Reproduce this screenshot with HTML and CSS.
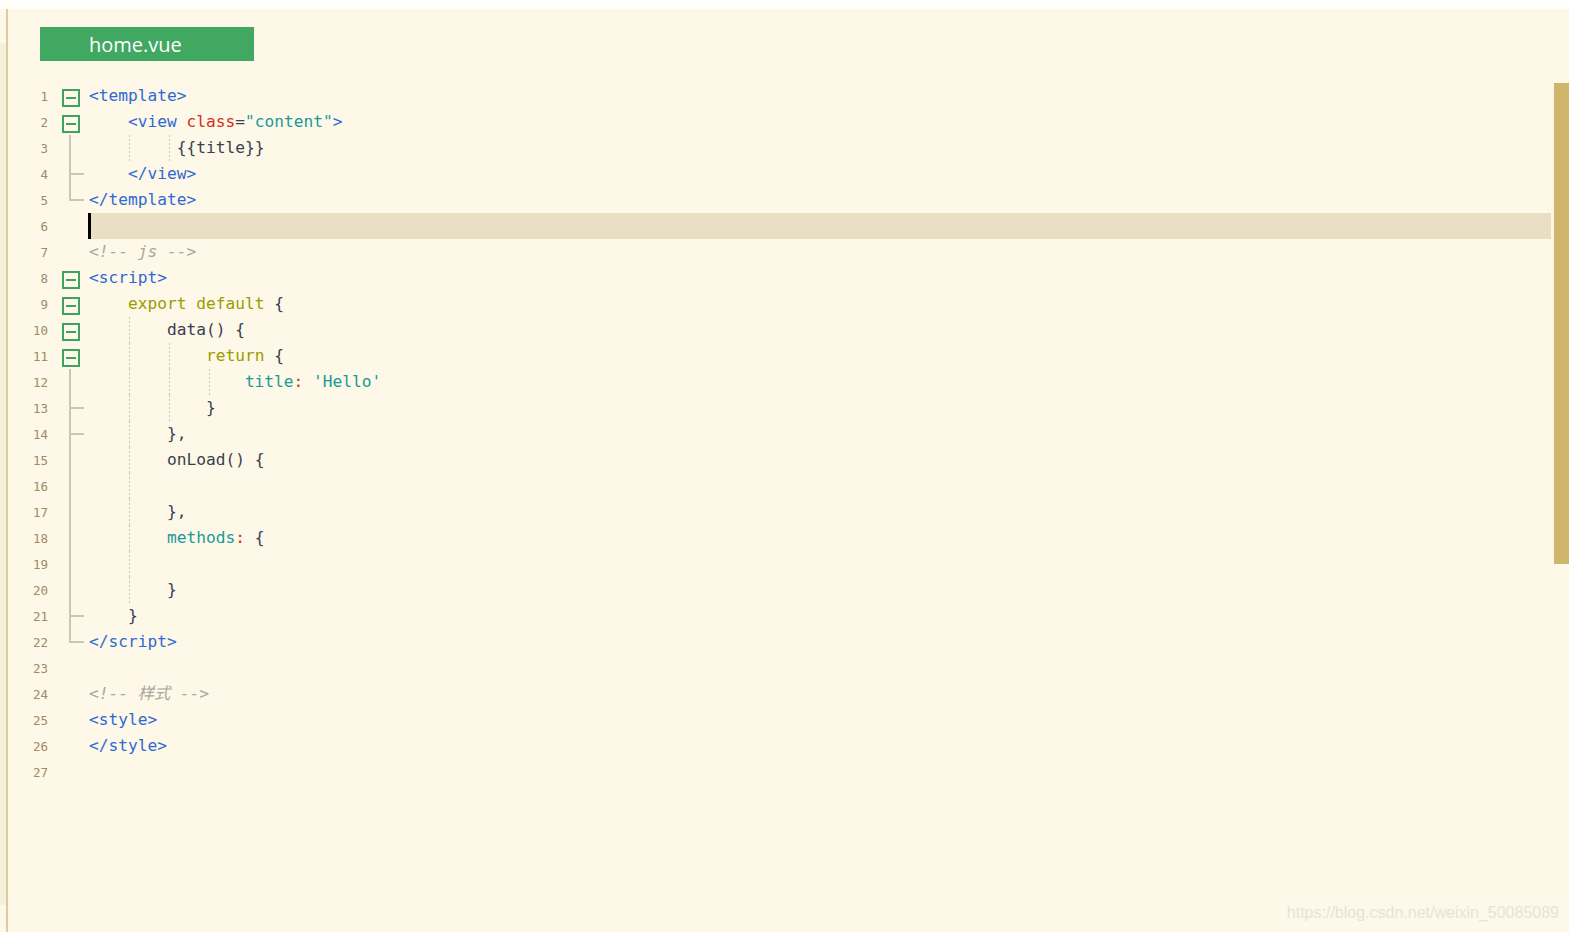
FILE: index.html
```html
<!DOCTYPE html>
<html lang="zh">
<head>
<meta charset="utf-8">
<title>home.vue</title>
<link rel="stylesheet" href="styles.css">
</head>
<body>
<div class="topstrip"></div>
<div class="editor">
  <div class="side">
    <div class="side-top"></div>
    <div class="side-mid"></div>
    <div class="side-bot"></div>
  </div>
  <div class="sideline"></div>
  <div class="main">
    <div class="tabbar"><div class="tab">home.vue</div></div>
    <div class="body">
      <div class="lines">
        <div class="line"><span class="num">1</span><span class="gut"><svg width="41" height="26"><rect class="fb" x="15" y="7" width="16" height="16"/><line class="fm" x1="18" y1="15" x2="28" y2="15"/></svg></span><span class="code"><span class="tg">&lt;template&gt;</span></span></div>
        <div class="line"><span class="num">2</span><span class="gut"><svg width="41" height="26"><rect class="fb" x="15" y="7" width="16" height="16"/><line class="fm" x1="18" y1="15" x2="28" y2="15"/></svg></span><span class="code"><span class="ws"></span><span class="tg">&lt;view </span><span class="at">class</span><span class="tx">=</span><span class="st">"content"</span><span class="tg">&gt;</span></span></div>
        <div class="line"><span class="num">3</span><span class="gut"><svg width="41" height="26"><line class="fl" x1="22" y1="0" x2="22" y2="26"/></svg></span><span class="code"><span class="ws"></span><span class="ws g1"></span><span class="ws1 g2"></span><span class="tx">{{title}}</span></span></div>
        <div class="line"><span class="num">4</span><span class="gut"><svg width="41" height="26"><line class="fl" x1="22" y1="0" x2="22" y2="26"/><line class="fl" x1="23" y1="13" x2="36" y2="13"/></svg></span><span class="code"><span class="ws"></span><span class="tg">&lt;/view&gt;</span></span></div>
        <div class="line"><span class="num">5</span><span class="gut"><svg width="41" height="26"><line class="fl" x1="22" y1="0" x2="22" y2="14"/><line class="fl" x1="21" y1="13" x2="36" y2="13"/></svg></span><span class="code"><span class="tg">&lt;/template&gt;</span></span></div>
        <div class="line"><span class="num">6</span><span class="gut"></span><span class="code cur"><span class="caret"></span></span></div>
        <div class="line"><span class="num">7</span><span class="gut"></span><span class="code"><span class="cm">&lt;!-- js --&gt;</span></span></div>
        <div class="line"><span class="num">8</span><span class="gut"><svg width="41" height="26"><rect class="fb" x="15" y="7" width="16" height="16"/><line class="fm" x1="18" y1="15" x2="28" y2="15"/></svg></span><span class="code"><span class="tg">&lt;script&gt;</span></span></div>
        <div class="line"><span class="num">9</span><span class="gut"><svg width="41" height="26"><rect class="fb" x="15" y="7" width="16" height="16"/><line class="fm" x1="18" y1="15" x2="28" y2="15"/></svg></span><span class="code"><span class="ws"></span><span class="kw">export default</span><span class="tx"> {</span></span></div>
        <div class="line"><span class="num">10</span><span class="gut"><svg width="41" height="26"><rect class="fb" x="15" y="7" width="16" height="16"/><line class="fm" x1="18" y1="15" x2="28" y2="15"/></svg></span><span class="code"><span class="ws"></span><span class="ws g1"></span><span class="tx">data() {</span></span></div>
        <div class="line"><span class="num">11</span><span class="gut"><svg width="41" height="26"><rect class="fb" x="15" y="7" width="16" height="16"/><line class="fm" x1="18" y1="15" x2="28" y2="15"/></svg></span><span class="code"><span class="ws"></span><span class="ws g1"></span><span class="ws g2"></span><span class="kw">return</span><span class="tx"> {</span></span></div>
        <div class="line"><span class="num">12</span><span class="gut"><svg width="41" height="26"><line class="fl" x1="22" y1="0" x2="22" y2="26"/></svg></span><span class="code"><span class="ws"></span><span class="ws g1"></span><span class="ws g2"></span><span class="ws g3"></span><span class="st">title</span><span class="at">:</span><span class="st"> 'Hello'</span></span></div>
        <div class="line"><span class="num">13</span><span class="gut"><svg width="41" height="26"><line class="fl" x1="22" y1="0" x2="22" y2="26"/><line class="fl" x1="23" y1="13" x2="36" y2="13"/></svg></span><span class="code"><span class="ws"></span><span class="ws g1"></span><span class="ws g2"></span><span class="tx">}</span></span></div>
        <div class="line"><span class="num">14</span><span class="gut"><svg width="41" height="26"><line class="fl" x1="22" y1="0" x2="22" y2="26"/><line class="fl" x1="23" y1="13" x2="36" y2="13"/></svg></span><span class="code"><span class="ws"></span><span class="ws g1"></span><span class="tx">},</span></span></div>
        <div class="line"><span class="num">15</span><span class="gut"><svg width="41" height="26"><line class="fl" x1="22" y1="0" x2="22" y2="26"/></svg></span><span class="code"><span class="ws"></span><span class="ws g1"></span><span class="tx">onLoad() {</span></span></div>
        <div class="line"><span class="num">16</span><span class="gut"><svg width="41" height="26"><line class="fl" x1="22" y1="0" x2="22" y2="26"/></svg></span><span class="code"><span class="ws"></span><span class="ws g1"></span></span></div>
        <div class="line"><span class="num">17</span><span class="gut"><svg width="41" height="26"><line class="fl" x1="22" y1="0" x2="22" y2="26"/></svg></span><span class="code"><span class="ws"></span><span class="ws g1"></span><span class="tx">},</span></span></div>
        <div class="line"><span class="num">18</span><span class="gut"><svg width="41" height="26"><line class="fl" x1="22" y1="0" x2="22" y2="26"/></svg></span><span class="code"><span class="ws"></span><span class="ws g1"></span><span class="st">methods</span><span class="at">:</span><span class="tx"> {</span></span></div>
        <div class="line"><span class="num">19</span><span class="gut"><svg width="41" height="26"><line class="fl" x1="22" y1="0" x2="22" y2="26"/></svg></span><span class="code"><span class="ws"></span><span class="ws g1"></span></span></div>
        <div class="line"><span class="num">20</span><span class="gut"><svg width="41" height="26"><line class="fl" x1="22" y1="0" x2="22" y2="26"/></svg></span><span class="code"><span class="ws"></span><span class="ws g1"></span><span class="tx">}</span></span></div>
        <div class="line"><span class="num">21</span><span class="gut"><svg width="41" height="26"><line class="fl" x1="22" y1="0" x2="22" y2="26"/><line class="fl" x1="23" y1="13" x2="36" y2="13"/></svg></span><span class="code"><span class="ws"></span><span class="tx">}</span></span></div>
        <div class="line"><span class="num">22</span><span class="gut"><svg width="41" height="26"><line class="fl" x1="22" y1="0" x2="22" y2="14"/><line class="fl" x1="21" y1="13" x2="36" y2="13"/></svg></span><span class="code"><span class="tg">&lt;/script&gt;</span></span></div>
        <div class="line"><span class="num">23</span><span class="gut"></span><span class="code"></span></div>
        <div class="line"><span class="num">24</span><span class="gut"></span><span class="code"><span class="cm">&lt;!-- 样式 --&gt;</span></span></div>
        <div class="line"><span class="num">25</span><span class="gut"></span><span class="code"><span class="tg">&lt;style&gt;</span></span></div>
        <div class="line"><span class="num">26</span><span class="gut"></span><span class="code"><span class="tg">&lt;/style&gt;</span></span></div>
        <div class="line"><span class="num">27</span><span class="gut"></span><span class="code"></span></div>
      </div>
      <div class="scroll"><div class="thumb"></div></div>
    </div>
  </div>
</div>
<div class="watermark">https://blog.csdn.net/weixin_50085089</div>
</body>
</html>
```
FILE: styles.css
```css
html, body {
  margin: 0;
  padding: 0;
}
body {
  width: 1569px;
  height: 932px;
  overflow: hidden;
  background: #fdf8e7;
  position: relative;
  display: flex;
  flex-direction: column;
}
.topstrip {
  height: 9px;
  background: #fffefb;
  flex: none;
}
.editor {
  flex: 1;
  display: flex;
  min-height: 0;
}
.side {
  width: 6px;
  display: flex;
  flex-direction: column;
}
.side-top { height: 34px; }
.side-mid { flex: 1; background: #f6efd9; }
.side-bot { height: 27px; }
.sideline {
  width: 2px;
  background: #dccb9d;
}
.main {
  flex: 1;
  display: flex;
  flex-direction: column;
  min-width: 0;
}
.tabbar {
  padding: 18px 0 22px 32px;
}
.tab {
  width: 165px;
  height: 34px;
  padding-left: 49px;
  box-sizing: content-box;
  background: #41a862;
  color: #ffffff;
  font-family: "Open Sans", "Noto Sans", sans-serif;
  font-size: 20px;
  line-height: 36px;
}
.body {
  display: flex;
  flex: 1;
  min-height: 0;
}
.lines {
  flex: 1;
  margin-right: 3px;
  display: flex;
  flex-direction: column;
}
.line {
  display: flex;
  height: 26px;
}
.num {
  width: 40px;
  flex: none;
  text-align: right;
  font-family: "DejaVu Sans Mono", monospace;
  font-size: 12.5px;
  line-height: 26px;
  color: #a08a68;
  padding-top: 1px;
  box-sizing: border-box;
}
.gut {
  width: 41px;
  flex: none;
  height: 26px;
}
.gut svg {
  display: block;
}
.fb {
  fill: none;
  stroke: #3ea35e;
  stroke-width: 2;
}
.fm {
  stroke: #3ea35e;
  stroke-width: 2;
}
.fl {
  stroke: #cbc6b5;
  stroke-width: 2;
}
.code {
  flex: 1;
  display: flex;
  white-space: pre;
  font-family: "DejaVu Sans Mono", "Noto Sans CJK SC", monospace;
  font-size: 16.2px;
  line-height: 26px;
  color: #394050;
}
.code.cur {
  background: #e8dfc4;
}
.caret {
  width: 3px;
  height: 26px;
  margin-left: -1px;
  background: #000000;
}
.ws {
  display: inline-block;
  width: 4ch;
  height: 26px;
  flex: none;
}
.ws1 {
  display: inline-block;
  width: 1ch;
  height: 26px;
  flex: none;
}
.g1, .g2, .g3 {
  background-image: repeating-linear-gradient(to bottom, #c9c4b2 0 2px, transparent 2px 4px);
  background-size: 1px 100%;
  background-repeat: no-repeat;
}
.g1 { background-position: 1px 0; }
.g2 { background-position: 2px 0; }
.g3 { background-position: 3px 0; }
.tg { color: #2f68d4; }
.at { color: #d22f1c; }
.st { color: #1b9898; }
.kw { color: #9c9c00; }
.tx { color: #394050; }
.cm { color: #a9a79f; font-style: italic; }
.scroll {
  width: 15px;
  flex: none;
}
.thumb {
  height: 481px;
  background: #cfb66b;
}
.watermark {
  position: absolute;
  right: 10px;
  bottom: 10px;
  font-family: "Liberation Sans", Arial, sans-serif;
  font-size: 16px;
  color: #e8e3d7;
}
```
